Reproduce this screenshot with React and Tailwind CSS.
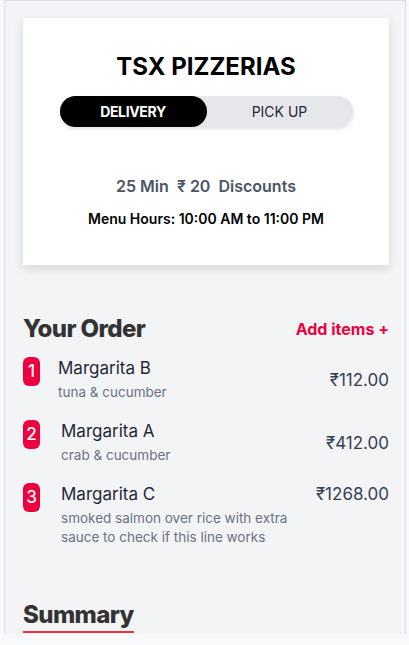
const items = [
  { n: 1, name: "Margarita B", desc: "tuna & cucumber", price: "₹112.00", align: "items-center", ml: "ml-[18px]" },
  { n: 2, name: "Margarita A", desc: "crab & cucumber", price: "₹412.00", align: "items-center", ml: "ml-[21px]" },
  {
    n: 3,
    name: "Margarita C",
    desc: "smoked salmon over rice with extra sauce to check if this line works",
    price: "₹1268.00",
    align: "items-start",
    ml: "ml-[21px]",
  },
];

export default function App() {
  return (
    <div className="font-['Inter',sans-serif] bg-[#f8f9fb] min-h-[645px]">
      <div className="ml-1 w-[402px] h-[634px] overflow-hidden bg-gray-100 border-l border-t border-r border-gray-300/70 pl-[18px] pr-[16px] pt-[17px]">
        <div className="bg-white shadow-[0_4px_10px_rgba(0,0,0,0.12)] h-[247px] flex flex-col items-center pt-[37px]">
          <h1 className="text-[24px] font-bold text-black leading-none">TSX PIZZERIAS</h1>
          <div className="mt-[17px] w-[293px] h-[31px] rounded-full bg-gray-200 flex shadow-[0_2px_4px_rgba(0,0,0,0.12)]">
            <button className="w-[147px] h-full rounded-full bg-black text-white text-[14px] font-bold tracking-tight">
              DELIVERY
            </button>
            <button className="flex-1 h-full text-[14px] text-gray-800">PICK UP</button>
          </div>
          <p className="mt-[51px] text-[16px] font-semibold text-gray-600 leading-none">
            25 Min&nbsp; ₹ 20&nbsp; Discounts
          </p>
          <p className="mt-[18px] text-[14px] font-semibold text-black leading-none">
            Menu Hours: 10:00 AM to 11:00 PM
          </p>
        </div>

        <div className="mt-[50px] flex items-center justify-between h-[28px]">
          <h2 className="text-[24px] font-extrabold text-[#333] tracking-tight leading-[28px]">Your Order</h2>
          <button className="text-[16px] font-bold text-rose-600">Add items +</button>
        </div>

        <div className="mt-[14px] flex flex-col gap-[18px]">
          {items.map((it) => (
            <div key={it.n} className={`flex ${it.align}`}>
              <span className="self-start w-[17px] h-[29px] rounded-md bg-rose-600 text-white text-[17px] font-medium flex items-center justify-center shrink-0">
                {it.n}
              </span>
              <div className={`${it.ml} flex-1`}>
                <p className="text-[17px] text-gray-800 leading-[20px] mt-[1px]">{it.name}</p>
                <p className="text-[13.5px] text-gray-500 leading-[19px] mt-[5px] w-[240px]">{it.desc}</p>
              </div>
              <p className={`text-[17px] text-gray-700 leading-[20px] ${it.n === 3 ? "mt-[1px]" : ""}`}>{it.price}</p>
            </div>
          ))}
        </div>

        <div className="mt-[54px] inline-block">
          <h2 className="text-[24px] font-extrabold text-[#333] tracking-tight leading-[28px]">Summary</h2>
          <div className="mt-[2px] h-[2px] bg-red-500" />
        </div>
      </div>
    </div>
  );
}
